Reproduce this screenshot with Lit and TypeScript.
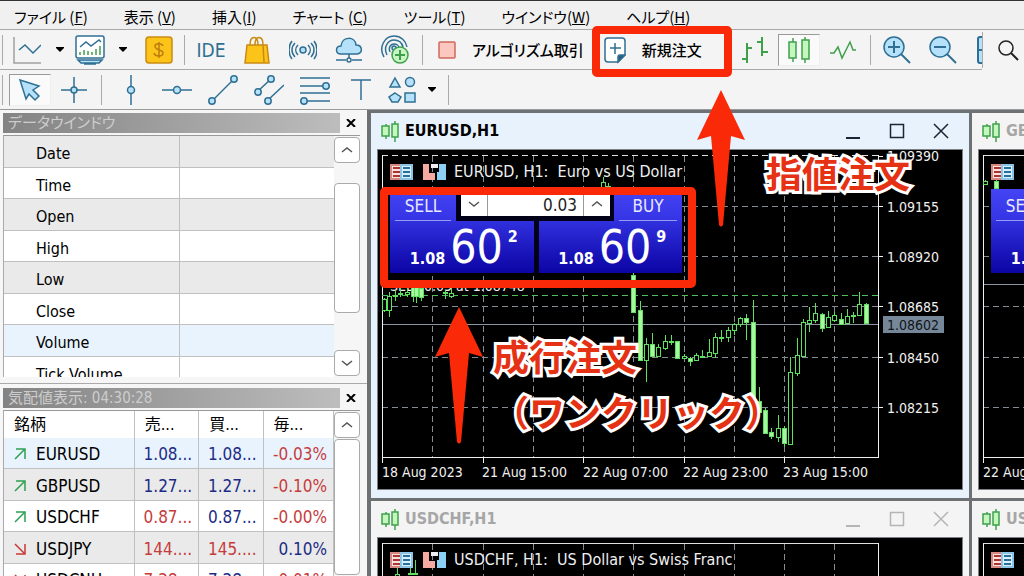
import { LitElement, html, svg, css } from "lit";
import { customElement, property } from "lit/decorators.js";
import { classMap } from "lit/directives/class-map.js";

const UI = css`"DejaVu Sans Condensed", "DejaVu Sans", "Noto Sans CJK JP", sans-serif`;
const JP = css`"Noto Sans CJK JP", sans-serif`;

/* ---------- icons ---------- */
const S = "#2f6f93";
const F = "#b5e2fa";
const G = "#3fa04c";

const pic = (w: number, h: number, body: unknown) =>
  html`<svg width=${w} height=${h} viewBox="0 0 ${w} ${h}" fill="none" stroke-width="1.5" aria-hidden="true">${body}</svg>`;

const icons: Record<string, () => unknown> = {
  line: () => pic(28, 28, svg`<path d="M1 1V27H28" stroke="#a0a0a0"/><path d="M6 14l6-5 8 8 8-8" stroke=${S}/>`),
  caret: () => pic(10, 6, svg`<path d="M1 0h8v1L5 5 1 1z" fill="#000"/>`),
  monitor: () => pic(30, 30, svg`<rect x="1" y="1" width="28" height="22" rx="2" fill="#fff" stroke=${S}/>
    <path d="M3 25h24l-3 3H6zM9 29h12" fill=${F} stroke=${S}/>
    <path d="M5 12l6-5 5 4 8-6 2 2" stroke=${S}/>
    <path d="M5 20v-3M9 20v-5M13 20v-4M17 20v-3M21 20v-6M25 20v-9" stroke=${G}/>`),
  dollar: () => pic(28, 28, svg`<rect x="1" y="1" width="26" height="26" rx="3" fill="#fcc419" stroke="#c98a12"/>
    <path d="M18 10c-1-3-8-3-8 0 0 5 8 3 8 7 0 4-8 4-9 0M14 6v16" stroke="#bd7d10"/>`),
  bag: () => pic(26, 28, svg`<path d="M3 9h20l2 18H1z" fill="#fcc419" stroke="#c98a12"/><path d="M19 9l1 17M6 9C6-1 14-1 14 9M11 9C11-1 19-1 19 9" stroke="#c98a12"/>`),
  signal: () => pic(28, 20, svg`<circle cx="14" cy="10" r="3" fill=${F} stroke=${S}/>
    <path d="M9 5c-3 3-3 7 0 10M6 3c-4 4-4 10 0 14M3 1c-4 5-4 13 0 18M19 5c3 3 3 7 0 10M22 3c4 4 4 10 0 14M25 1c4 5 4 13 0 18" stroke=${S}/>`),
  cloud: () => pic(28, 26, svg`<path d="M6 17c-6 0-6-8 0-8C7-1 20-1 21 8c7 0 7 9 1 9z" fill=${F} stroke=${S}/>
    <path d="M14 17v4M1 23h10M17 23h10" stroke=${S}/><circle cx="14" cy="23" r="2" stroke=${S}/>`),
  radar: () => pic(30, 30, svg`<path d="M4 22C-2 12 5 1 14 1c7 0 12 5 13 11M7 20C3 12 8 5 14 5c5 0 8 3 9 7M10 17c-2-5 1-8 4-8 3 0 5 2 5 4" stroke=${S}/>
    <circle cx="14" cy="13" r="2" fill=${F} stroke=${S}/><circle cx="20" cy="20" r="8" fill="#c9f5c4" stroke=${G}/><path d="M20 15v10M15 20h10" stroke=${G} stroke-width="2"/>`),
  stop: () => pic(18, 18, svg`<rect x="1" y="1" width="16" height="16" rx="1" fill="#fcc7be" stroke="#cd6a5d"/>`),
  doc: () => pic(22, 28, svg`<path d="M4 2h14c2 0 3 1 3 3v14l-7 7H4c-2 0-3-1-3-3V5c0-2 1-3 3-3z" fill="#fff" stroke=${S}/>
    <path d="M14 26v-5c0-1 1-2 2-2h5z" fill="#245d80" stroke=${S}/><path d="M11 7v11M6 12h11" stroke=${S}/>`),
  bars: () => pic(28, 28, svg`<path d="M6 7v20M1 23h5M6 12h5M21 1v19M16 6h5M21 16h6" stroke=${G} stroke-width="2"/>`),
  candles: () => pic(22, 26, svg`<path d="M5 1v24M17 0v26" stroke=${G}/><rect x="1" y="5" width="7" height="16" fill="#c4f7bd" stroke=${G}/><rect x="14" y="3" width="7" height="19" fill="#c4f7bd" stroke=${G}/>`),
  zig: () => pic(28, 20, svg`<path d="M1 13h4l4-6 4 11 8-16 3 8h3" stroke=${G}/>`),
  plus: () => pic(28, 28, svg`<path d="M18 18l9 9" stroke=${S} stroke-width="2"/><circle cx="11" cy="11" r="10" fill=${F} stroke=${S}/><path d="M11 5v12M5 11h12" stroke=${S} stroke-width="2"/>`),
  minus: () => pic(28, 28, svg`<path d="M18 18l9 9" stroke=${S} stroke-width="2"/><circle cx="11" cy="11" r="10" fill=${F} stroke=${S}/><path d="M5 11h12" stroke=${S} stroke-width="2"/>`),
  tile: () => pic(5, 28, svg`<path d="M5 1H3C2 1 1 2 1 3v22c0 1 1 2 2 2h2M1 14h4" fill=${F} stroke=${S} stroke-width="2"/>`),
  search: () => pic(22, 22, svg`<circle cx="9" cy="9" r="7" stroke="#222"/><path d="M14 14l7 7" stroke="#222" stroke-width="2"/>`),
  cursor: () => pic(24, 24, svg`<path d="M2 2l19 6-6 4 6 6-4 4-6-6-3 5z" fill=${F} stroke=${S}/>`),
  cross: () => pic(26, 28, svg`<path d="M13 1v26M0 14h26" stroke=${S}/><circle cx="13" cy="14" r="3" fill=${F} stroke=${S}/>`),
  vline: () => pic(10, 30, svg`<path d="M5 0v30" stroke=${S}/><circle cx="5" cy="15" r="3.5" fill=${F} stroke=${S}/>`),
  hline: () => pic(30, 10, svg`<path d="M0 5h30" stroke=${S}/><circle cx="15" cy="5" r="3.5" fill=${F} stroke=${S}/>`),
  trend: () => pic(30, 30, svg`<path d="M4 26L26 4" stroke=${S}/><circle cx="4" cy="26" r="3.2" fill=${F} stroke=${S}/><circle cx="26" cy="4" r="3.2" fill=${F} stroke=${S}/>`),
  channel: () => pic(30, 30, svg`<path d="M4 16L17 4M14 25l16-15" stroke=${S}/><circle cx="4" cy="17" r="3.2" fill=${F} stroke=${S}/><circle cx="17" cy="4" r="3.2" fill=${F} stroke=${S}/><circle cx="14" cy="26" r="3.2" fill=${F} stroke=${S}/>`),
  fibo: () => pic(30, 30, svg`<path d="M0 3h30M0 11h30M0 18h30M0 26h30" stroke=${S}/><circle cx="26" cy="11" r="3.2" fill=${F} stroke=${S}/><circle cx="4" cy="26" r="3.2" fill=${F} stroke=${S}/>`),
  text: () => pic(20, 22, svg`<path d="M0 1h20M10 1v20" stroke=${S}/>`),
  shapes: () => pic(28, 28, svg`<g fill=${F} stroke=${S}><path d="M7 2l5 9H2z"/><circle cx="22" cy="6" r="4.5"/><path d="M7 17l6 4-3 5H4l-3-5z"/><rect x="17" y="17" width="10" height="9"/></g>`),
  titleCandles: () => pic(18, 22, svg`<path d="M5 4v15M14 1v21" stroke=${G}/><rect x="1" y="6" width="7" height="10" fill="#c4f7bd" stroke=${G}/><rect x="11" y="4" width="6" height="13" fill="#c4f7bd" stroke=${G}/>`),
  up: () => pic(12, 12, svg`<path d="M1 11L10 2M2 1h9v10" stroke="#2da052"/>`),
  down: () => pic(12, 12, svg`<path d="M1 1l9 9M11 1v10H2" stroke="#c93a3a"/>`),
  chevUp: () => pic(12, 8, svg`<path d="M1 6l5-4 5 4" stroke="#555"/>`),
  chevDown: () => pic(12, 8, svg`<path d="M1 2l5 4 5-4" stroke="#555"/>`),
  close: () => pic(10, 8, svg`<path d="M1 0l8 8M9 0L1 8" stroke="#000" stroke-width="2"/>`),
  winMin: () => pic(16, 16, svg`<path d="M1 15h14" stroke="currentColor" stroke-width="2"/>`),
  winMax: () => pic(16, 16, svg`<rect x="1.5" y="1.5" width="13" height="13" stroke="currentColor"/>`),
  winClose: () => pic(16, 16, svg`<path d="M1 1l14 14M15 1L1 15" stroke="currentColor"/>`),
};

/* ---------- chart data: x, high, low, body top, body bottom, filled ---------- */
type Candle = [number, number, number, number, number, number];
const eurusd: Candle[] = [
  [6, 148, 162, 149, 160, 0], [11, 142, 167, 146, 160, 0], [17, 140, 151, 145, 146, 0], [22, 138, 147, 143, 144, 0],
  [29, 136, 147, 142, 144, 0], [35, 134, 152, 136, 146, 1], [38, 134, 153, 136, 146, 1], [43, 136, 151, 138, 147, 1],
  [67, 140, 149, 142, 143, 0], [73, 137, 148, 143, 146, 0], [225, 27, 60, 32, 56, 0], [230, 33, 70, 36, 60, 0],
  [255, 120, 163, 125, 162, 1], [262, 151, 211, 160, 210, 1], [268, 188, 232, 194, 210, 0], [274, 183, 207, 194, 206, 1],
  [280, 194, 207, 197, 206, 0], [287, 185, 200, 191, 198, 0], [293, 185, 195, 191, 192, 0], [299, 191, 209, 191, 208, 1],
  [306, 204, 208, 206, 208, 0], [312, 207, 216, 208, 211, 1], [318, 203, 211, 205, 210, 0], [324, 200, 208, 206, 207, 0],
  [331, 189, 206, 202, 206, 0], [337, 183, 208, 187, 203, 0], [343, 180, 192, 187, 188, 0], [350, 177, 192, 180, 187, 0],
  [356, 173, 185, 174, 180, 0], [362, 167, 177, 168, 174, 0], [368, 164, 190, 168, 172, 1], [375, 150, 262, 172, 260, 1],
  [381, 237, 264, 251, 262, 1], [387, 258, 284, 260, 283, 1], [393, 278, 289, 282, 286, 1], [400, 265, 292, 278, 287, 0],
  [406, 276, 297, 278, 293, 1], [412, 207, 295, 222, 294, 0], [419, 188, 226, 205, 223, 0], [425, 169, 207, 172, 206, 0],
  [431, 157, 182, 170, 173, 0], [437, 153, 173, 163, 170, 0], [444, 163, 182, 164, 178, 1], [450, 161, 177, 167, 177, 0],
  [456, 162, 172, 165, 170, 0], [463, 163, 175, 169, 174, 1], [469, 159, 173, 166, 173, 0], [475, 162, 173, 165, 166, 0],
  [481, 142, 166, 154, 165, 0], [488, 153, 174, 154, 173, 1],
];
const gbpusd: Candle[] = [[6, 30, 35, 31, 34, 0], [17, 29, 40, 31, 38, 1]];
const usdchf: Candle[] = [[19, 30, 40, 36, 40, 0], [32, 27, 36, 35, 36, 0], [37, 22, 36, 35, 36, 0]];

const gridX = [54, 105, 155, 205, 255, 306, 356, 406, 456];
const gridY = [56, 106, 156, 207, 257];
const prices = ["1.09155", "1.08920", "1.08685", "1.08450", "1.08215"];

@customElement("chart-window")
class ChartWindow extends LitElement {
  @property() symbol = "";
  @property() name = "";
  @property() base = "1.08";
  @property({ type: Array }) times: string[] = [];
  @property({ type: Array }) candles: Candle[] = [];
  @property({ type: Boolean }) active = false;
  @property({ type: Boolean }) solid = false;
  @property({ type: Number }) bid = 174;

  static styles = css`
    :host { display: flex; flex-direction: column; min-height: 0; background: #f4f4f4; color: #a6a6a6; font-family: ${UI}; padding: 0 6px 8px; }
    :host([active]) { background: #e8f2fc; color: #000; }
    header { display: flex; align-items: center; height: 36px; flex: none; gap: 6px; padding-left: 4px; }
    h2 { flex: 1; margin: 0; font-size: 16px; font-weight: bold; line-height: 20px; }
    .ctl { display: flex; color: #b5b5b5; }
    :host([active]) .ctl { color: #1c2433; }
    button { font: inherit; border: 0; margin: 0; padding: 0; background: none; color: inherit; }
    .ctl button { width: 44px; height: 32px; display: grid; place-items: center; }
    .frame { position: relative; flex: 1; min-height: 0; background: #000; border: 1px solid #7c8085; overflow: hidden; }
    .plot { display: block; width: 100%; height: 100%; }
    .plot text { fill: #f0f0f0; font-size: 14px; }
    .plot .name { font-size: 16px; }
    .plot .cur { fill: #101418; }
    .trade { position: absolute; left: 12px; top: 39px; width: 292px; display: grid; grid-template-columns: 66px 158px 68px; grid-template-rows: 32px 52px; color: #e8e8ff; background: #000018; }
    .tab { font-size: 17px; line-height: 35px; background: linear-gradient(#4444f4, #3434e4); text-align: center; }
    .tab span { display: block; height: 31px; margin: 0 5px; border-bottom: 1px solid #9a9af4; }
    .vol { display: flex; margin: 0 4px 5px 5px; background: #fff; }
    .vol button { width: 26px; display: grid; place-items: center; padding-top: 2px; }
    .vol input { flex: 1; min-width: 0; border: 1px solid #999; border-width: 0 1px; margin: 0; padding: 4px 6px 0; font: 17px ${UI}; text-align: right; background: #fff; color: #222; }
    .quotes { grid-column: 1 / 4; display: grid; grid-template-columns: 1fr 1fr; gap: 5px; }
    .quote { display: flex; align-items: flex-end; justify-content: center; gap: 5px; background: linear-gradient(#3030de, #0c04a4); color: #fff; font-weight: bold; font-size: 16px; padding: 0 12px 5px 16px; }
    .quote b { line-height: 18px; }
    .quote .big { font-weight: normal; font-size: 46px; line-height: 42px; }
    .quote sup { align-self: flex-start; font-size: 16px; line-height: 18px; padding-top: 7px; vertical-align: top; }
  `;

  render() {
    const dash = this.solid ? "none" : "6 4";
    return html`
      <header>
        ${icons.titleCandles()}
        <h2>${this.symbol},H1</h2>
        <div class="ctl">
          <button aria-label="Minimize">${icons.winMin()}</button>
          <button aria-label="Maximize">${icons.winMax()}</button>
          <button aria-label="Close">${icons.winClose()}</button>
        </div>
      </header>
      <div class="frame">
        <svg class="plot" fill="none" shape-rendering="crispEdges">
          <g stroke="#858b93" stroke-dasharray="6 4">
            ${gridX.map((x) => svg`<path d="M${x}.5 6V307"/>`)}
            ${gridY.map((y) => svg`<path d="M4 ${y}.5H500"/>`)}
          </g>
          <path d="M4 5.5H500" stroke="#e0e0e0" stroke-dasharray=${dash}/>
          <path d="M4 ${this.bid}.5H500" stroke="#8b95a3"/>
          <path d="M4.5 5V313M500.5 5V308M4 307.5H501" stroke="#f0f0f0"/>
          ${[105, 205, 306, 406].map((x) => svg`<path d="M${x}.5 307V313" stroke="#f0f0f0"/>`)}
          ${this.active
            ? svg`<path d="M4 145.5H500" stroke="#4fbf5c" stroke-dasharray="6 4"/>
              ${[6, ...gridY].map((y) => svg`<path d="M500 ${y}.5H505" stroke="#f0f0f0"/>`)}
              <text x="509" y="11">1.09390</text>
              ${prices.map((p, i) => svg`<text x="509" y=${gridY[i] + 6}>${p}</text>`)}
              <rect x="505" y="166" width="61" height="17" fill="#77879a"/>
              <text class="cur" x="509" y="180">1.08602</text>
              <text x="12" y="141">SELL 0.03 at 1.08748</text>`
            : ""}
          ${this.candles.map(([x, h, l, t, b, f]) => svg`<path d="M${x}.5 ${h}V${l}" stroke="#5fe05f"/>
            <rect x=${x - 2 + 0.5} y=${t + 0.5} width="4" height=${Math.max(1, b - t)} stroke="#5fe05f" fill=${f ? "#a6f7a0" : "#000"}/>`)}
          ${this.times.map((t, i) => svg`<text x=${[4, 104, 205, 305, 405][i]} y="327">${t}</text>`)}
          <g stroke-width="2">
            <path d="M13 15h10v14H13z" fill="#fbe0dc" stroke="#d98880"/><path d="M23 15h11v14H23z" fill="#d9effb" stroke="#8cc4e8"/>
            <path d="M15 18h7M15 22h7M15 26h7" stroke="#a33"/><path d="M25 18h7M25 22h7M25 26h7" stroke="#27709c"/>
          </g>
          <path d="M45 14h6v9h6v7H45z" fill="#f5a9a0"/><path d="M61 14h7v16h-9v-8h2z" fill="#8cd0f5"/><path d="M53 14h7v4h-7z" fill="#eee"/>
          <text class="name" x="76" y="27" xml:space="preserve">${this.symbol}, H1:  ${this.name}</text>
        </svg>
        <div class="trade">
          <button class="tab"><span>SELL</span></button>
          <div class="vol">
            <button aria-label="Less">${icons.chevDown()}</button>
            <input aria-label="Volume" value="0.03" />
            <button aria-label="More">${icons.chevUp()}</button>
          </div>
          <button class="tab"><span>BUY</span></button>
          <div class="quotes">
            <button class="quote"><b>${this.base}</b><span class="big">60</span><sup>2</sup></button>
            <button class="quote"><b>${this.base}</b><span class="big">60</span><sup>9</sup></button>
          </div>
        </div>
      </div>
    `;
  }
}

const menus = [["ファイル (", "F"], ["表示 (", "V"], ["挿入(", "I"], ["チャート (", "C"], ["ツール(", "T"], ["ウインドウ(", "W"], ["ヘルプ(", "H"]];
const fields = ["Date", "Time", "Open", "High", "Low", "Close", "Volume", "Tick Volume"];
const quotes = [
  ["up", "EURUSD", "1.08...", "b", "1.08...", "b", "-0.03%", "r"],
  ["up", "GBPUSD", "1.27...", "b", "1.27...", "b", "-0.10%", "r"],
  ["up", "USDCHF", "0.87...", "r", "0.87...", "b", "-0.00%", "r"],
  ["down", "USDJPY", "144....", "r", "145....", "r", "0.10%", "b"],
  ["down", "USDCNH", "7.28...", "r", "7.28...", "b", "-0.01%", "r"],
];
const times1 = ["18 Aug 2023", "21 Aug 15:00", "22 Aug 07:00", "22 Aug 23:00", "23 Aug 15:00"];
const times2 = ["22 Aug 2023"];

@customElement("app-root")
class AppRoot extends LitElement {
  static styles = css`
    :host { display: flex; flex-direction: column; height: 100vh; position: relative; overflow: hidden; background: #f4f4f4; font-family: ${UI}; color: #000; box-sizing: border-box; border-top: 1px solid #333; }
    button { font: inherit; color: inherit; border: 0; margin: 0; padding: 0; background: none; }
    nav { display: flex; gap: 36px; height: 29px; flex: none; align-items: center; padding: 3px 14px 0; box-sizing: border-box; background: #f0f0f0; border-bottom: 1px solid #a8a8a8; font: 15px/20px ${JP}; font-feature-settings: "palt"; }
    nav a { color: inherit; text-decoration: none; white-space: nowrap; }
    .bar { display: flex; align-items: center; height: 39px; flex: none; box-sizing: border-box; }
    .bar.one { height: 40px; }
    .main { display: flex; align-items: center; align-self: stretch; border-bottom: 1px solid #a8a8a8; }
    .bar button { display: grid; place-items: center; height: 32px; flex: none; }
    .sep { width: 1px; height: 30px; background: #aaa; flex: none; margin: 0 3px 0 4px; }
    .sep:first-child { margin-left: 2px; }
    .two .sep { margin-right: 6px; }
    .w16 { width: 16px; } .w24 { width: 24px; } .w30 { width: 30px; } .w36 { width: 36px; } .w42 { width: 42px; } .w46 { width: 46px; }
    .bar button.w16 { place-items: center end; }
    .bar button.on { width: 42px; background: #fafafa; border: 1px solid #9a9a9a; border-right-color: #eee; border-bottom-color: #eee; box-sizing: border-box; }
    .bar button.labelled { display: flex; align-items: center; gap: 16px; padding: 0 8px 0 12px; font: 500 15px/20px ${JP}; font-feature-settings: "palt"; white-space: nowrap; }
    .bar button.order { padding-right: 30px; }
    .ide { color: #2f6f93; font-size: 19px; }
    .end { align-self: stretch; width: 1px; background: #aaa; margin: 2px 0; }
    .find { margin-left: 14px; }
    .work { flex: 1; min-height: 0; display: grid; grid-template-columns: 367px 1fr; border-top: 1px solid #9a9a9a; }
    .side { display: flex; flex-direction: column; min-height: 0; padding: 3px 7px 0 3px; gap: 2px; background: #f6f6f6; overflow: hidden; }
    .cap { display: flex; align-items: center; flex: none; height: 20px; }
    .cap h3 { flex: 1; margin: 0; padding-left: 5px; font: 15px/20px ${UI}; font-feature-settings: "palt"; color: #cdcdcd; background: linear-gradient(90deg, #838383, #bdbdbd); }
    .cap button { width: 20px; height: 20px; display: grid; place-items: center end; padding-right: 4px; box-sizing: border-box; }
    .list { display: flex; overflow: hidden; border-top: 1px solid #999; border-left: 1px solid #aaa; }
    .list.data { height: 241px; flex: none; }
    .list.market { flex: 1; min-height: 0; }
    table { flex: 1; border-collapse: separate; border-spacing: 0; table-layout: fixed; background: #fff; align-self: flex-start; font-size: 16px; line-height: 20px; }
    td, th { height: 32px; padding: 5px 0 0; box-sizing: border-box; border-bottom: 1px solid #c0c0c0; border-right: 1px solid #c0c0c0; font-weight: normal; text-align: left; white-space: nowrap; overflow: hidden; }
    tr:nth-child(even) td, tr:nth-child(even) th { height: 31px; }
    .data th { width: 176px; padding-left: 32px; }
    .data td { border-right: 0; }
    .data tr:nth-child(odd) { background: #eaeaea; }
    .data tr.hot, .market tr.hot { background: #e8f3fe; }
    .market table { font-size: 17px; }
    .market tbody tr:nth-child(even) { background: #eaeaea; }
    .market tbody td, .market tbody th { padding-top: 2px; }
    .market tbody tr:nth-child(odd) td, .market tbody tr:nth-child(odd) th { height: 31px; }
    .market tbody tr:nth-child(even) td, .market tbody tr:nth-child(even) th { height: 32px; }
    .market thead th { height: 27px; padding: 0 0 0 10px; border-bottom: 0; font-size: 16px; }
    .c1 { width: 130px; } .c2 { width: 64px; } .c4 { width: 70px; }
    .sym { display: flex; align-items: center; gap: 10px; padding-left: 10px; }
    .market td { text-align: right; padding-right: 6px; }
    .b { color: #1c2c86; } .r { color: #c63c3c; }
    .scroll { display: flex; flex-direction: column; width: 26px; flex: none; padding: 1px 0; }
    .scroll button, .thumb { box-sizing: border-box; border: 1px solid #aaa; border-radius: 4px; background: #fff; }
    .scroll button { height: 26px; flex: none; display: grid; place-items: center; }
    .thumb { height: 130px; margin: 20px 0 auto; }
    .market .thumb { height: auto; flex: 1; margin: 1px 0 0; }
    .rule { height: 1px; flex: none; background: #aaa; margin: 4px -7px 2px -3px; }
    .desk { display: grid; grid-template-columns: 598px 598px; grid-template-rows: 385px 385px; gap: 3px; padding: 3px 0 0 4px; background: #6d7173; overflow: hidden; min-width: 0; }
    .mark { position: absolute; box-sizing: border-box; border: 8px solid #fa2a08; border-radius: 5px; }
    .m1 { left: 592px; top: 25px; width: 140px; height: 51px; }
    .m2 { left: 380px; top: 186px; width: 316px; height: 101px; }
    .arrow { position: absolute; fill: #fa2a08; }
    .a1 { left: 696px; top: 89px; }
    .a2 { left: 434px; top: 306px; }
    .note { position: absolute; margin: 0; font: bold 36px/56px ${JP}; color: #e63214; -webkit-text-stroke: 6px #fff; paint-order: stroke fill; stroke-linejoin: round; white-space: nowrap; }
    .n1 { left: 766px; top: 143px; }
    .n2 { left: 493px; top: 326px; }
  `;

  private tool(icon: string, cls: string) {
    return html`<button class=${cls} aria-label=${icon}>${icons[icon]()}</button>`;
  }

  private arrow(cls: string) {
    return html`<svg class="arrow ${cls}" width="50" height="138" viewBox="0 0 50 138" aria-hidden="true"><path d="M25 0L49 50 35 46 27 135Q25 138 23 135L15 46 1 50z"/></svg>`;
  }

  render() {
    return html`
      <nav>${menus.map(([t, k]) => html`<a href="#">${t}<u>${k}</u>)</a>`)}</nav>
      <div class="bar one">
        <div class="main">
          <i class="sep"></i>
          ${this.tool("line", "w42")}${this.tool("caret", "w24")}${this.tool("monitor", "w36")}${this.tool("caret", "w30")}${this.tool("dollar", "w42")}
          <i class="sep"></i>
          <button class="w46 ide">IDE</button>
          ${["bag", "signal", "cloud", "radar"].map((n) => this.tool(n, "w46"))}
          <i class="sep"></i>
          <button class="labelled">${icons.stop()}アルゴリズム取引</button>
          <button class="labelled order">${icons.doc()}新規注文</button>
          ${this.tool("bars", "w46")}${this.tool("candles", "on")}${this.tool("zig", "w46")}
          <i class="sep"></i>
          ${this.tool("plus", "w46")}${this.tool("minus", "w46")}${this.tool("tile", "w16")}
        </div>
        <i class="end"></i>
        <button class="find" aria-label="search">${icons.search()}</button>
      </div>
      <div class="bar two">
        <i class="sep"></i>
        ${this.tool("cursor", "on")}${this.tool("cross", "w46")}
        <i class="sep"></i>
        ${["vline", "hline", "trend", "channel", "fibo", "text"].map((n) => this.tool(n, "w46"))}
        ${this.tool("shapes", "w36")}${this.tool("caret", "w24")}
        <i class="sep"></i>
      </div>
      <div class="work">
        <div class="side">
          <div class="cap"><h3>データウインドウ</h3><button aria-label="close">${icons.close()}</button></div>
          <div class="list data">
            <table>
              ${fields.map((f) => html`<tr class=${classMap({ hot: f === "Volume" })}><th>${f}</th><td></td></tr>`)}
            </table>
            <div class="scroll"><button aria-label="up">${icons.chevUp()}</button><div class="thumb"></div><button aria-label="down">${icons.chevDown()}</button></div>
          </div>
          <div class="rule"></div>
          <div class="cap"><h3>気配値表示: 04:30:28</h3><button aria-label="close">${icons.close()}</button></div>
          <div class="list market">
            <table>
              <thead><tr><th class="c1">銘柄</th><th class="c2">売...</th><th class="c2">買...</th><th class="c4">毎...</th></tr></thead>
              <tbody>
                ${quotes.map(([d, s, a, ac, b, bc, c, cc], i) => html`<tr class=${classMap({ hot: i === 0 })}>
                  <th><div class="sym">${icons[d]()}${s}</div></th><td class=${ac}>${a}</td><td class=${bc}>${b}</td><td class=${cc}>${c}</td>
                </tr>`)}
              </tbody>
            </table>
            <div class="scroll"><button aria-label="up">${icons.chevUp()}</button><div class="thumb"></div></div>
          </div>
        </div>
        <div class="desk">
          <chart-window active symbol="EURUSD" name="Euro vs US Dollar" .times=${times1} .candles=${eurusd}></chart-window>
          <chart-window symbol="GBPUSD" name="" base="1.27" solid .bid=${134} .times=${times2} .candles=${gbpusd}></chart-window>
          <chart-window symbol="USDCHF" name="US Dollar vs Swiss Franc" solid .candles=${usdchf}></chart-window>
          <chart-window symbol="USDJPY" name="" solid></chart-window>
        </div>
      </div>
      <div class="mark m1"></div>
      <div class="mark m2"></div>
      ${this.arrow("a1")}${this.arrow("a2")}
      <p class="note n1">指値注文</p>
      <p class="note n2">成行注文<br />（ワンクリック）</p>
    `;
  }
}
